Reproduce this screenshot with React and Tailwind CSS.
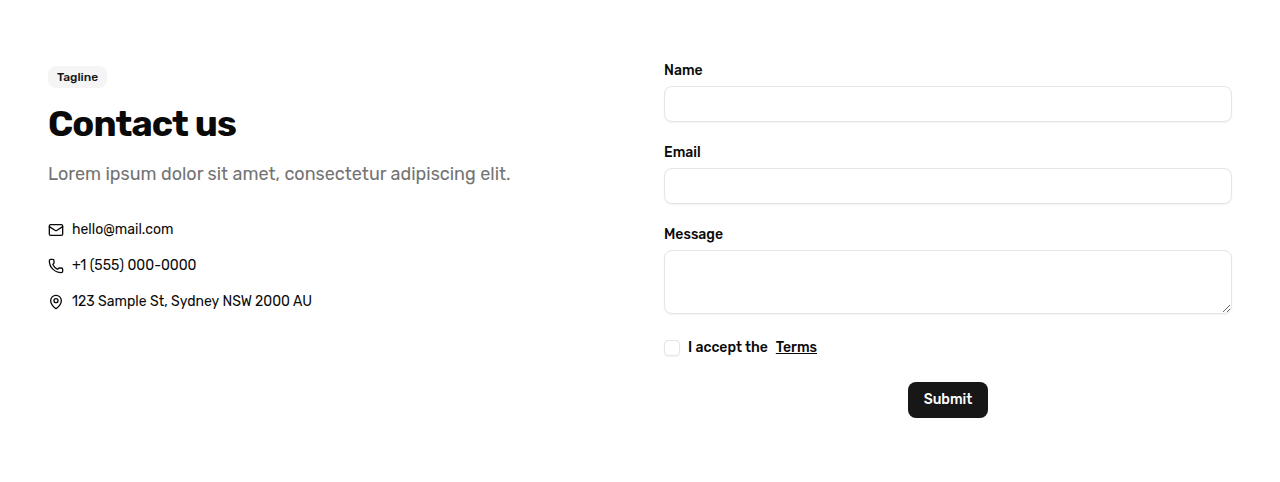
import { Mail, Phone, MapPin } from "lucide-react";

const inputClass =
  "block w-full rounded-lg border border-[#e5e5e5] bg-white px-3 text-sm shadow-xs outline-none";

function Detail({ icon: Icon, children }) {
  return (
    <li className="flex items-center gap-2">
      <Icon size={16} strokeWidth={2} className="shrink-0" />
      <span className="text-sm whitespace-nowrap">{children}</span>
    </li>
  );
}

function Field({ id, label, children }) {
  return (
    <div className="flex flex-col gap-2">
      <label htmlFor={id} className="text-sm leading-none font-medium">{label}</label>
      {children}
    </div>
  );
}

export default function App() {
  return (
    <section className="grid min-h-[482px] grid-cols-2 gap-12 bg-white px-12 pt-16 font-['Rubik','Roboto',sans-serif] text-[#0a0a0a]">
      <div>
        <span className="mt-0.5 inline-flex h-[22px] items-center rounded-lg bg-[#f5f5f5] px-[9px] text-xs font-medium text-[#171717]">Tagline</span>
        <h1 className="mt-4 text-4xl font-bold tracking-tight">Contact us</h1>
        <p className="mt-4 text-lg text-[#737373]">Lorem ipsum dolor sit amet, consectetur adipiscing elit.</p>
        <ul className="mt-8 flex flex-col gap-4">
          <Detail icon={Mail}>hello@mail.com</Detail>
          <Detail icon={Phone}>+1 (555) 000-0000</Detail>
          <Detail icon={MapPin}>123 Sample St, Sydney NSW 2000 AU</Detail>
        </ul>
      </div>
      <form className="flex flex-col gap-6">
        <Field id="name" label="Name"><input id="name" className={inputClass + " h-9"} /></Field>
        <Field id="email" label="Email"><input id="email" className={inputClass + " h-9"} /></Field>
        <Field id="message" label="Message"><textarea id="message" className={inputClass + " h-16 resize-y"} /></Field>
        <div className="flex h-5 items-center gap-2">
          <input type="checkbox" id="terms" className="size-4 appearance-none rounded-[4px] border border-[#e5e5e5] shadow-xs" />
          <label htmlFor="terms" className="flex items-center gap-2 text-sm leading-none font-medium">
            I accept the
            <a href="#" className="text-sm underline">Terms</a>
          </label>
        </div>
        <button type="button" className="h-9 w-20 self-center rounded-lg bg-[#171717] text-sm font-medium text-white">Submit</button>
      </form>
    </section>
  );
}
